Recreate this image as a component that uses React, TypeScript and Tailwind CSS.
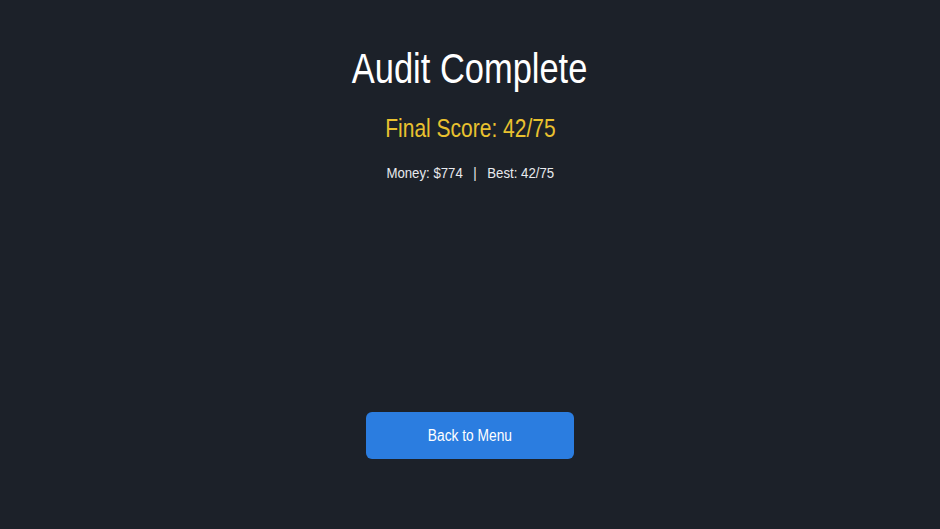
export default function App() {
  const font = { fontFamily: '"Liberation Sans", Arial, sans-serif' };
  return (
    <div className="min-h-screen w-full bg-[#1c2129] flex flex-col items-center" style={font}>
      <h1 className="mt-[48px] text-[42px] leading-none text-white font-normal scale-x-[0.82]">Audit Complete</h1>
      <p className="mt-[26px] text-[25px] leading-none text-[#e9c12f] scale-x-[0.84]">Final Score: 42/75</p>
      <div className="mt-[24px] text-[15px] leading-none text-[#e8eaee] flex items-center scale-x-[0.88]">
        <span>Money: $774</span>
        <span className="mx-[12px]">|</span>
        <span>Best: 42/75</span>
      </div>
      <button className="mt-[232px] w-[208px] h-[47px] rounded-md bg-[#2b7de0] text-white text-[16px] leading-none">
        <span className="inline-block scale-x-[0.86]">Back to Menu</span>
      </button>
    </div>
  );
}
